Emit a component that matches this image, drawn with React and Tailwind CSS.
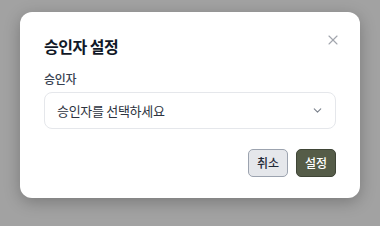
import React from "react";

export default function App() {
  const font = { fontFamily: '"Noto Sans CJK KR", "Noto Sans", sans-serif' };
  return (
    <div className="w-[380px] h-[226px] bg-[#a2a2a2] pt-[12px] pl-[20px]" style={font}>
      <div className="w-[340px] h-[186px] bg-white rounded-[12px] shadow-[0_4px_16px_rgba(0,0,0,0.25)] px-6 pt-[22px] flex flex-col">
        <div className="flex items-start justify-between">
          <h2 className="text-[16px] leading-[24px] font-bold text-[#111827] tracking-[-0.5px]">승인자 설정</h2>
          <button className="mr-[-5px] mt-[-2px] text-[#a1a5ad]">
            <svg width="16" height="16" viewBox="0 0 24 24" fill="none" stroke="currentColor" strokeWidth="1.6" strokeLinecap="round">
              <path d="M18 6 6 18" />
              <path d="m6 6 12 12" />
            </svg>
          </button>
        </div>
        <label className="mt-[13px] text-[12px] leading-[16px] font-medium text-[#374151] tracking-[-0.3px]">승인자</label>
        <div className="mt-[5px] h-[37px] w-[292px] rounded-[8px] border border-[#e5e7eb] flex items-center justify-between pl-[12px] pr-[11px]">
          <span className="text-[13px] text-[#2d3340] tracking-[-0.3px]">승인자를 선택하세요</span>
          <svg width="13" height="13" viewBox="0 0 24 24" fill="none" stroke="#7b818c" strokeWidth="2" strokeLinecap="round" strokeLinejoin="round">
            <path d="m6 9 6 6 6-6" />
          </svg>
        </div>
        <div className="mt-[20px] flex justify-end gap-[8px]">
          <button className="w-[40px] h-[28px] rounded-[5px] bg-[#e5e7eb] border border-[#9ca3af] text-[12px] font-medium text-[#1f2937]">취소</button>
          <button className="w-[40px] h-[28px] rounded-[5px] bg-[#555c48] border border-[#3f4536] text-[12px] font-medium text-white">설정</button>
        </div>
      </div>
    </div>
  );
}
